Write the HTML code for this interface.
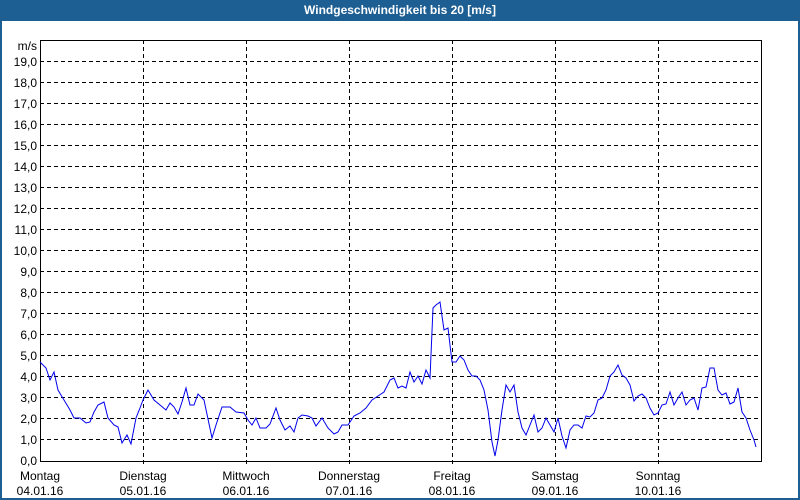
<!DOCTYPE html>
<html><head><style>
html,body{margin:0;padding:0;background:#fff}
body{width:800px;height:500px;overflow:hidden;position:relative}
</style></head><body>
<svg width="800" height="500" xmlns="http://www.w3.org/2000/svg" style="position:absolute;left:0;top:0;font-family:'Liberation Sans',sans-serif;font-size:12px">
<rect x="0" y="0" width="800" height="500" fill="#1d5e93"/>
<rect x="2" y="21" width="796" height="477" fill="#fff"/>
<text x="400" y="14" fill="#fff" font-weight="bold" text-anchor="middle" font-size="12">Windgeschwindigkeit bis 20 [m/s]</text>
<g stroke="#000" stroke-width="1" stroke-dasharray="4,3" fill="none">
<path d="M40 61.5H761M40 82.5H761M40 103.5H761M40 124.5H761M40 145.5H761M40 166.5H761M40 187.5H761M40 208.5H761M40 229.5H761M40 250.5H761M40 271.5H761M40 292.5H761M40 313.5H761M40 334.5H761M40 355.5H761M40 376.5H761M40 397.5H761M40 418.5H761M40 439.5H761"/>
<path d="M143.5 40V466M246.5 40V466M349.5 40V466M452.5 40V466M555.5 40V466M658.5 40V466"/>
</g>
<rect x="40.5" y="40.5" width="721" height="421" fill="none" stroke="#000"/>
<g text-anchor="end" fill="#000">
<text x="37" y="50">m/s</text>
<text x="37" y="66">19,0</text><text x="37" y="87">18,0</text><text x="37" y="108">17,0</text><text x="37" y="129">16,0</text><text x="37" y="150">15,0</text><text x="37" y="171">14,0</text><text x="37" y="192">13,0</text><text x="37" y="213">12,0</text><text x="37" y="234">11,0</text><text x="37" y="255">10,0</text><text x="37" y="276">9,0</text><text x="37" y="297">8,0</text><text x="37" y="318">7,0</text><text x="37" y="339">6,0</text><text x="37" y="360">5,0</text><text x="37" y="381">4,0</text><text x="37" y="402">3,0</text><text x="37" y="423">2,0</text><text x="37" y="444">1,0</text><text x="37" y="465">0,0</text>
</g>
<g text-anchor="middle" fill="#000">
<text x="40" y="480">Montag</text><text x="40" y="495">04.01.16</text>
<text x="143" y="480">Dienstag</text><text x="143" y="495">05.01.16</text>
<text x="246" y="480">Mittwoch</text><text x="246" y="495">06.01.16</text>
<text x="349" y="480">Donnerstag</text><text x="349" y="495">07.01.16</text>
<text x="452" y="480">Freitag</text><text x="452" y="495">08.01.16</text>
<text x="555" y="480">Samstag</text><text x="555" y="495">09.01.16</text>
<text x="658" y="480">Sonntag</text><text x="658" y="495">10.01.16</text>
</g>
<polyline fill="none" stroke="#0000ee" stroke-width="1" points="40,362 46,368 50,380 54,372 58,390 64,400 70,410 74,418 80,418 86,423 90,422 94,412 98,405 104,402 108,418 114,425 118,427 122,443 127,435 131,444 136,418 140,408 143,400 148,390 154,400 160,405 166,410 170,403 174,407 178,414 182,402 186,388 190,405 194,405 198,394 204,400 212,438 216,425 222,407 230,407 236,412 244,413 248,420 252,425 256,418 260,428 266,428 270,424 276,408 280,420 285,430 290,426 294,432 298,418 302,415 308,416 312,418 316,426 322,418 328,428 334,434 338,432 342,425 348,425 354,416 360,413 366,408 372,400 378,396 384,392 390,380 394,378 398,388 402,386 406,388 410,372 414,382 418,376 422,384 426,370 430,378 433,308 436,305 440,302 444,330 448,328 452,362 456,362 460,356 464,360 468,370 472,376 476,376 480,380 484,390 488,410 492,442 495,456 498,440 502,410 506,385 510,392 514,385 518,412 522,428 526,435 530,425 534,415 538,432 542,428 546,418 550,425 554,432 558,418 562,436 566,448 570,430 574,425 578,425 582,428 586,416 590,417 594,413 598,400 602,398 606,390 610,376 614,372 618,365 622,375 626,378 630,385 634,401 638,396 642,394 646,398 650,408 654,415 658,413 662,405 666,404 670,392 674,405 678,398 682,392 686,405 690,400 694,398 698,410 702,388 706,387 710,368 714,368 718,390 722,395 726,393 730,404 734,402 738,388 742,412 746,418 750,430 754,440 756,447"/>
</svg>
</body></html>
